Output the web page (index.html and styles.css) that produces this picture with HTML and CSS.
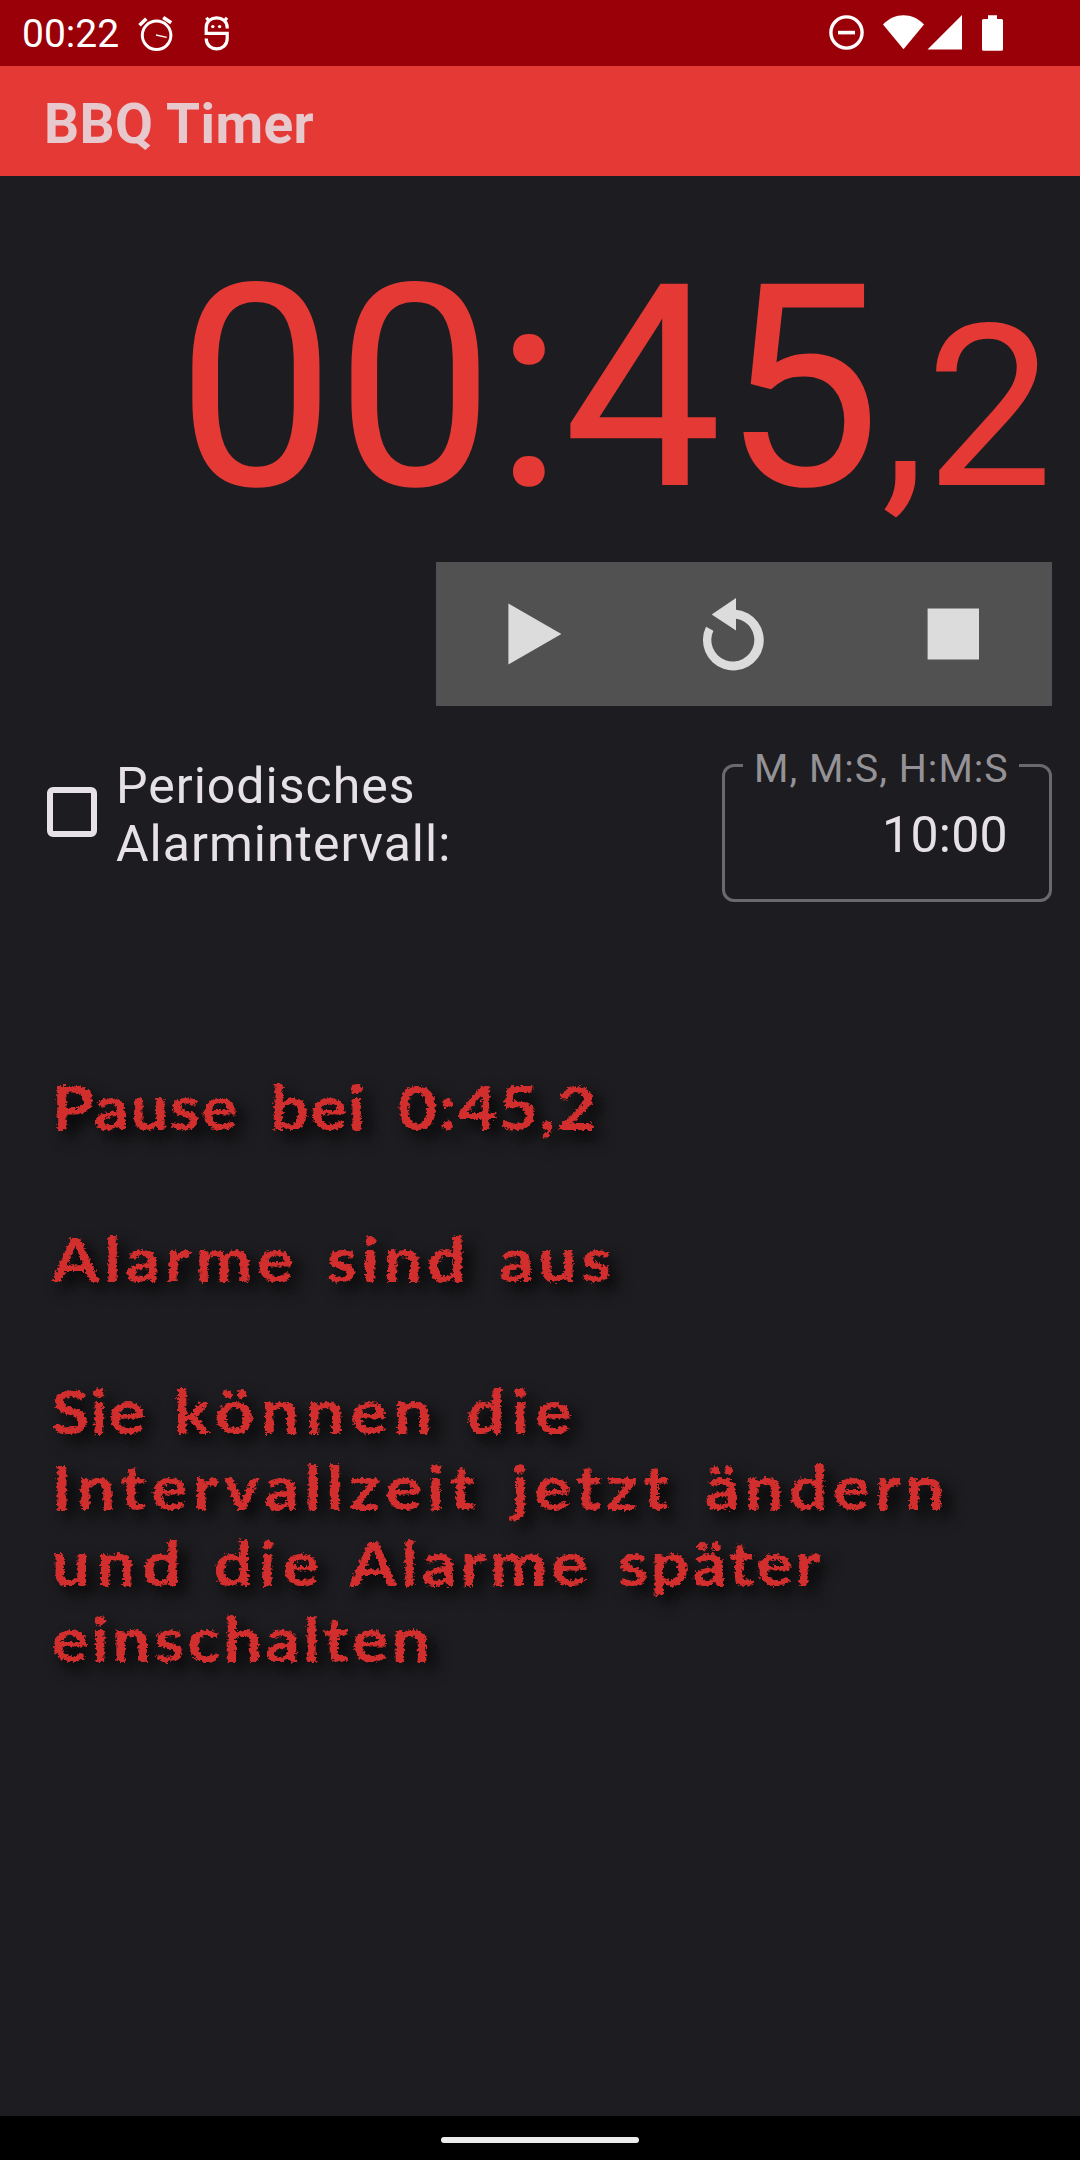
FILE: index.html
```html
<!DOCTYPE html>
<html lang="de">
<head>
<meta charset="utf-8">
<title>BBQ Timer</title>
<link rel="stylesheet" href="styles.css">
</head>
<body>
<div class="status-bar">
  <span class="clock">00:22</span>
  <svg class="notifications" width="96" height="66" viewBox="136 0 96 66" fill="none" stroke="#fff">
    <circle cx="156.6" cy="35.3" r="14.3" stroke-width="3"/>
    <path d="M139.5 25.2 146.3 18.8M163.2 17.4 171.2 22.8" stroke-width="3.6"/>
    <path d="M156 35 166.8 37.4" stroke-width="1.4"/>
    <path d="M227.2 28.5V27.5C227.2 14.6 206.2 14.6 206.2 27.5V33.4H227.2V38.5C227.2 52.3 206.2 52.3 206.2 38.5M206.4 17.8 209.8 22M227 17.8 223.6 22" stroke-width="3.2"/>
    <g fill="#fff" stroke="none"><circle cx="212.8" cy="26.6" r="1.7"/><circle cx="219.6" cy="26.6" r="1.7"/></g>
  </svg>
  <svg class="system" width="180" height="66" viewBox="828 0 180 66" fill="#fff">
    <circle cx="846.5" cy="32.5" r="15.6" fill="none" stroke="#fff" stroke-width="3.4"/>
    <path d="M838 30.8h17v3.6h-17z"/>
    <path d="M883 24.5C889 18.2 896 15.2 903.5 15.2S918 18.2 924 24.5L903.5 49.3z"/>
    <path d="M927.5 49.6 962 15v34.6z"/>
    <path d="M988 15.2h9V19h4.5q1.5 0 1.5 1.5v28.700q0 1.500-1.500 1.500h-18q-1.500 0-1.500-1.500V20.500q0-1.500 1.500-1.500h4.500z"/>
  </svg>
</div>
<header class="app-bar"><h1>BBQ Timer</h1></header>
<main>
  <div class="time">00:45<small>,2</small></div>
  <div class="controls">
    <svg width="616" height="144" viewBox="436 562 616 144" fill="#dcdcdc">
      <path d="M508.400 603.500 561.400 634 508.400 664.500z"/>
      <path d="M711.700 614.500 736 598V609.800A30.400 30.400 0 1 1 706 626.800L713.400 630.700A21.500 21.500 0 1 0 736 618.700V630.500z"/>
      <path d="M927.600 608.500h51.400v51h-51.400z"/>
    </svg>
  </div>
  <div class="interval">
    <span class="checkbox"></span>
    <label>Periodisches<br>Alarmintervall:</label>
    <fieldset><legend>M, M:S, H:M:S</legend><span class="value">10:00</span></fieldset>
  </div>
  <div class="message">
    <p class="l1">Pause bei 0:45,2</p>
    <p class="l2">Alarme sind aus</p>
    <p><span class="l3"><span class="tight">Sie</span> <span class="loose">können</span> <span class="loose">die</span></span><br><span class="l4">Intervallzeit jetzt ändern</span><br><span class="l5"><span class="loose">und</span> <span class="loose">die</span> Alarme <span class="snug">später</span></span><br><span class="l6">einschalten</span></p>
  </div>
</main>
<footer><span class="handle"></span></footer>
<svg class="defs" width="0" height="0">
  <filter id="chalk" x="-2%" y="-5%" width="104%" height="110%">
    <feTurbulence type="fractalNoise" baseFrequency="0.35" numOctaves="2" seed="4" result="n"/>
    <feDisplacementMap in="SourceGraphic" in2="n" scale="6" xChannelSelector="R" yChannelSelector="G"/>
  </filter>
</svg>
</body>
</html>
```
FILE: styles.css
```css
* { box-sizing: border-box; }
body {
  margin: 0;
  width: 1080px;
  height: 2160px;
  display: flex;
  flex-direction: column;
  overflow: hidden;
  background: #1d1c20;
  color: #e6e1e5;
  font-family: Roboto, "Noto Sans", sans-serif;
}
svg { display: block; }
.defs { position: absolute; }
.status-bar {
  height: 66px;
  flex: none;
  display: flex;
  padding: 0 72px 0 22px;
  background: #9a0007;
  color: #fff;
}
.clock { width: 114px; font-size: 39px; line-height: 69px; }
.system { margin-left: auto; }
.app-bar {
  height: 110px;
  flex: none;
  padding: 7px 44px 0;
  background: #e53935;
}
h1 { margin: 0; font-size: 55px; line-height: 103px; letter-spacing: 0.4px; color: #e6c8cd; }
main { flex: 1; padding: 42px 28px 0 44px; }
.time {
  height: 344px;
  margin-right: -1px;
  line-height: 340px;
  font-size: 283px;
  text-align: right;
  white-space: nowrap;
  color: #e53935;
}
.time small { font-size: 226.400px; line-height: 0; }
.controls { width: 616px; height: 144px; margin-left: auto; background: #515151; }
.interval {
  display: flex;
  margin-top: 37px;
  height: 160px;
}
.checkbox {
  width: 50px;
  height: 50px;
  margin: 44px 19px 0 3px;
  border: 6px solid #e6e1e5;
  border-radius: 6px;
}
label { margin-top: 14px; font-size: 50px; line-height: 58px; letter-spacing: 1px; }
fieldset {
  width: 330px;
  height: 162px;
  margin: -3px 0 0 auto;
  padding: 0 18px;
  border: 3px solid #6a696c;
  border-radius: 12px;
  text-align: right;
}
legend {
  width: 276px;
  height: 50px;
  padding: 0 0 0 11px;
  font-size: 39.400px;
  line-height: 58px;
  letter-spacing: 1px;
  color: #949296;
  text-align: left;
  white-space: nowrap;
}
.value { display: block; margin-top: 16px; padding-right: 23px; font-size: 50px; line-height: 58px; letter-spacing: 0.3px; }
.message {
  width: 880px;
  margin-top: 166px;
  padding-left: 7px;
  color: #d32f2f;
  font-family: Lato, "Open Sans", sans-serif;
  font-weight: 700;
  font-size: 61px;
  line-height: 76px;
  white-space: nowrap;
  text-shadow: 7px 8px 14px #000;
  filter: url(#chalk);
  transform: scaleX(1.12);
  transform-origin: left;
}
.message p { margin: 0 0 76px; }
.l1 { letter-spacing: 1.1px; word-spacing: 12px; }
.l2 { letter-spacing: 4.2px; word-spacing: 6.5px; }
.l3 { letter-spacing: 4.1px; word-spacing: 5.5px; }
.l4 { letter-spacing: 4.8px; word-spacing: 8px; }
.l5 { letter-spacing: 3.6px; word-spacing: 5px; }
.l6 { letter-spacing: 2.9px; }
.tight { letter-spacing: 1px; }
.snug { letter-spacing: 2.2px; }
.loose { letter-spacing: 5.8px; }
footer {
  height: 44px;
  flex: none;
  display: flex;
  justify-content: center;
  padding-top: 21px;
  background: #000;
}
.handle { width: 198px; height: 6px; border-radius: 3px; background: #ececec; }
```
